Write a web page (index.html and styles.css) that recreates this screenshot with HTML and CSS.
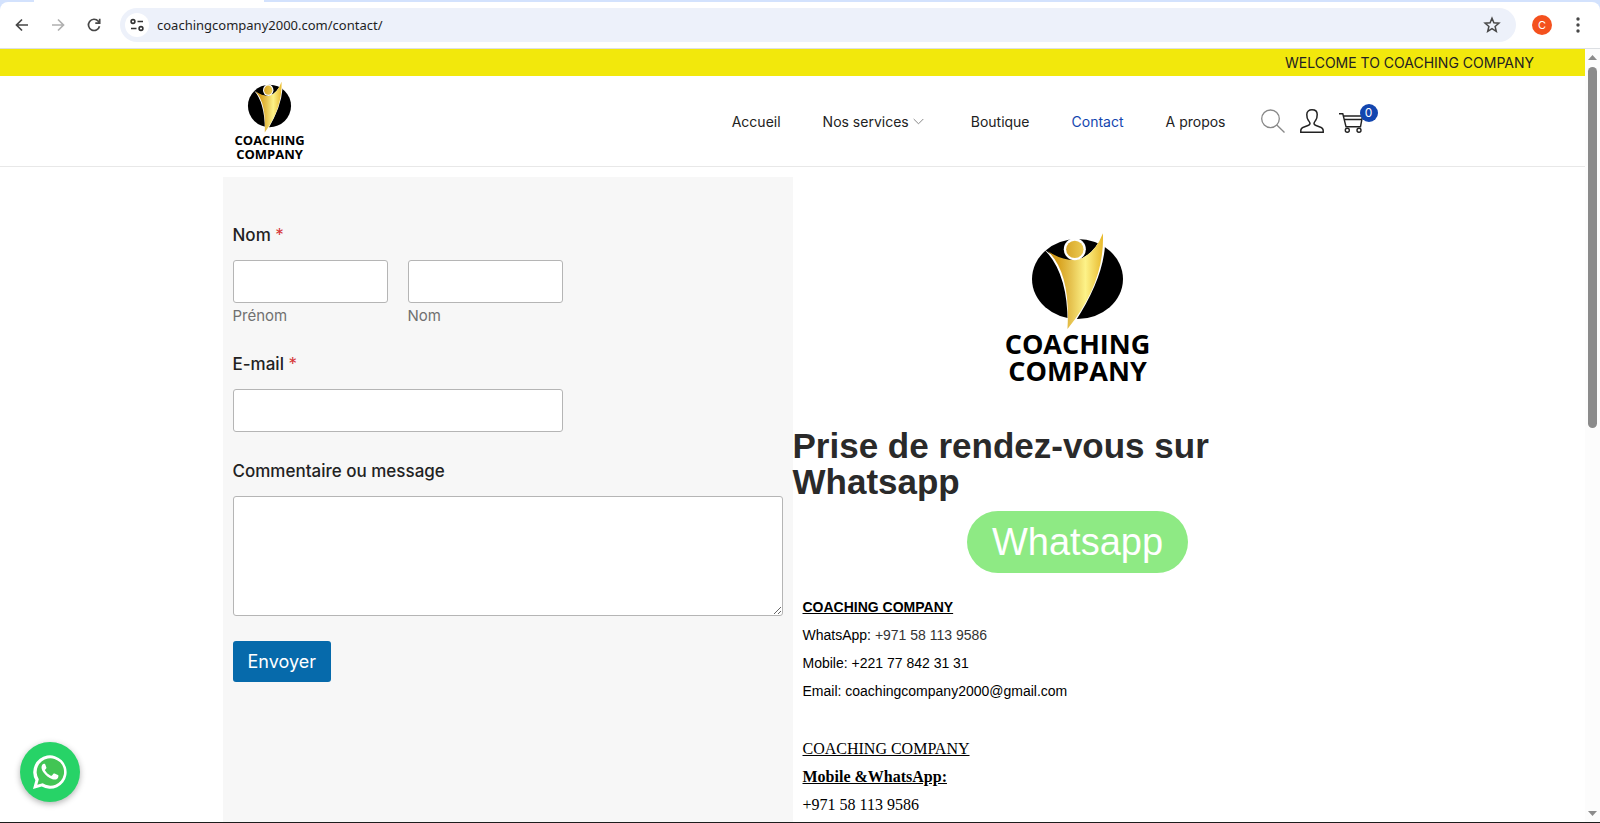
FILE: index.html
```html
<!DOCTYPE html>
<html lang="fr">
<head>
    <meta charset="UTF-8">
    <meta name="viewport" content="width=device-width, initial-scale=1.0">
    <title>Contact - Coaching Company</title>
    <link rel="stylesheet" href="styles.css">
</head>
<body>
    <!-- Shared emblem -->
    <svg class="defs" aria-hidden="true">
        <defs>
            <linearGradient id="gold" x1="0" x2="1" y1="0" y2="0">
                <stop offset="0" stop-color="#c98f12"/>
                <stop offset="0.2" stop-color="#d9a420"/>
                <stop offset="0.42" stop-color="#e6c350"/>
                <stop offset="0.68" stop-color="#fdf288"/>
                <stop offset="1" stop-color="#e8b92c"/>
            </linearGradient>
            <linearGradient id="gold-head" x1="0" x2="1" y1="0" y2="0">
                <stop offset="0" stop-color="#d8a628"/>
                <stop offset="1" stop-color="#eccb52"/>
            </linearGradient>
        </defs>
        <symbol id="emblem" viewBox="150 36 284 294" preserveAspectRatio="none">
            <ellipse cx="292" cy="177" rx="136" ry="120" fill="#000"/>
            <path d="M190 86 Q240 128 290 120 Q340 108 371 36 L374 80 Q366 180 285 305 L262 332 Q268 160 190 86Z" fill="#fff"/>
            <path d="M204 94 Q246 122 288 120 Q342 108 368 40 Q374 190 262 327 Q272 160 204 94Z" fill="url(#gold)"/>
            <circle cx="284" cy="88" r="33" fill="#fff"/>
            <circle cx="284" cy="88" r="26" fill="url(#gold-head)"/>
        </symbol>
    </svg>

    <div class="tabs"></div>
    <div class="toolbar">
        <button class="tool" aria-label="Retour">
            <svg width="20" height="20" viewBox="0 0 20 20"><path d="M16 10H5M10 4.500L4.500 10l5.500 5.500" stroke="#474747" stroke-width="1.700" fill="none"/></svg>
        </button>
        <button class="tool" aria-label="Avancer">
            <svg width="20" height="20" viewBox="0 0 20 20"><path d="M4 10h11M10 4.500L15.500 10 10 15.500" stroke="#b0b0b0" stroke-width="1.700" fill="none"/></svg>
        </button>
        <button class="tool" aria-label="Actualiser">
            <svg width="20" height="20" viewBox="0 0 20 20"><path d="M15.500 11.200A5.600 5.600 0 1 1 14.300 6.200L15.500 7.600M15.700 3.800V8.200H11.300" stroke="#474747" stroke-width="1.700" fill="none"/></svg>
        </button>
        <div class="address">
            <span class="site-info">
                <svg width="16" height="16" viewBox="0 0 16 16" fill="none" stroke="#333" stroke-width="1.600"><circle cx="4" cy="4.500" r="1.900"/><path d="M8.500 4.500H14M2 11.500h5.500"/><circle cx="12" cy="11.500" r="1.900"/></svg>
            </span>
            <input class="url" type="text" aria-label="Adresse" value="coachingcompany2000.com/contact/">
            <button class="star" aria-label="Favori">
                <svg width="18" height="18" viewBox="0 0 18 18"><path d="M9 2.200l1.900 4.600 5 .4-3.800 3.200 1.200 4.900L9 12.700l-4.300 2.600 1.200-4.900L2.100 7.200l5-.4z" stroke="#474747" stroke-width="1.500" fill="none"/></svg>
            </button>
        </div>
        <button class="profile">C</button>
        <button class="tool menu-dots" aria-label="Menu">
            <svg width="4" height="16" viewBox="0 0 4 16" fill="#474747"><circle cx="2" cy="2" r="1.700"/><circle cx="2" cy="8" r="1.700"/><circle cx="2" cy="14" r="1.700"/></svg>
        </button>
    </div>

    <div class="viewport">
        <div class="page">
            <div class="top-bar">WELCOME TO COACHING COMPANY</div>
            <header class="header">
                <div class="container header-inner">
                    <a class="logo" href="#">
                        <svg class="logo-mark"><use href="#emblem"/></svg>
                        <span>COACHING<br>COMPANY</span>
                    </a>
                    <nav class="nav">
                        <a href="#">Accueil</a>
                        <a href="#" class="has-sub">Nos services
                            <svg width="11" height="7" viewBox="0 0 11 7"><path d="M.7 1l4.800 4.800L10.300 1" stroke="#888" fill="none"/></svg>
                        </a>
                        <a href="#">Boutique</a>
                        <a href="#" class="active">Contact</a>
                        <a href="#">A propos</a>
                    </nav>
                    <div class="header-icons">
                        <button aria-label="Rechercher">
                            <svg width="24" height="24" viewBox="0 0 24 24" fill="none" stroke="#888" stroke-width="1.300"><circle cx="9.500" cy="9.800" r="8.800"/><path d="M15.800 16l7.700 7.500"/></svg>
                        </button>
                        <button aria-label="Compte">
                            <svg width="24" height="24" viewBox="0 0 24 24" fill="none" stroke="#222" stroke-width="1.500"><path d="M.8 23.200v-1.700c0-2 1.500-3 4-3.800 3-1 5.200-1.400 5.200-3.200 0-1.200-.8-2-1.700-3.200C7 9.600 6.800 7 6.800 5.500 6.800 2.500 9 .8 12 .8s5.200 1.700 5.200 4.700c0 1.500-.2 4.100-1.500 5.800-.9 1.200-1.700 2-1.700 3.200 0 1.800 2.200 2.200 5.200 3.200 2.500.8 4 1.800 4 3.800v1.700z"/></svg>
                        </button>
                        <button class="cart" aria-label="Panier">
                            <svg width="24" height="24" viewBox="0 0 24 24" fill="none" stroke="#222" stroke-width="1.400"><path d="M0 4.800h3.800L7 17.700h14.500L23.500 7H4.500M5.300 10.500h17.500"/><circle cx="8.300" cy="21.300" r="2"/><circle cx="20" cy="21.300" r="2"/></svg>
                            <span class="badge">0</span>
                        </button>
                    </div>
                </div>
            </header>

            <main class="container columns">
                <form class="contact-form">
                    <fieldset class="field names">
                        <legend class="label">Nom <span class="required">*</span></legend>
                        <div class="name-row">
                            <div>
                                <input type="text" id="prenom">
                                <label class="sublabel" for="prenom">Prénom</label>
                            </div>
                            <div>
                                <input type="text" id="nom">
                                <label class="sublabel" for="nom">Nom</label>
                            </div>
                        </div>
                    </fieldset>
                    <div class="field">
                        <label class="label" for="email">E-mail <span class="required">*</span></label>
                        <input class="medium" type="email" id="email">
                    </div>
                    <div class="field">
                        <label class="label" for="message">Commentaire ou message</label>
                        <textarea id="message"></textarea>
                    </div>
                    <button class="submit-button" type="submit">Envoyer</button>
                </form>

                <section class="info">
                    <div class="big-logo">
                        <svg class="big-logo-mark"><use href="#emblem"/></svg>
                        <span>COACHING<br>COMPANY</span>
                    </div>
                    <h2>Prise de rendez-vous sur Whatsapp</h2>
                    <a class="whatsapp-button" href="#">Whatsapp</a>
                    <div class="details">
                        <p><b><u>COACHING COMPANY</u></b></p>
                        <p>WhatsApp: <span class="phone">+971 58 113 9586</span></p>
                        <p>Mobile: +221 77 842 31 31</p>
                        <p>Email: coachingcompany2000@gmail.com</p>
                    </div>
                    <div class="details serif">
                        <p><u>COACHING COMPANY</u></p>
                        <p><b><u>Mobile &amp;WhatsApp:</u></b></p>
                        <p>+971 58 113 9586</p>
                    </div>
                </section>
            </main>
        </div>
        <div class="scrollbar">
            <svg width="9" height="5" viewBox="0 0 9 5"><path d="M0 5L4.500 0 9 5z" fill="#8b8b8b"/></svg>
            <div class="track"><div class="thumb"></div></div>
            <svg width="9" height="5" viewBox="0 0 9 5"><path d="M0 0L4.500 5 9 0z" fill="#8b8b8b"/></svg>
        </div>
    </div>

    <a class="whatsapp-float" href="#" aria-label="WhatsApp">
        <svg width="34" height="34" viewBox="0 0 34 34">
            <path d="M0 34l2.400-8.700A16.700 16.700 0 1 1 8.700 31.600z" fill="#fff"/>
            <path d="M4.300 29.700l1.500-5.400A13.700 13.700 0 1 1 9.700 28.300z" fill="#42c554"/>
            <path d="M12.300 9.600c-.4-.8-.8-.8-1.300-.8-1.200 0-2.500 1.500-2.500 3.600 0 2.200 1.500 4.300 2.500 5.500 1.800 2.300 4.500 5 8.500 6.300 3.500 1.200 5.500-.7 5.800-2.300.2-1.200.2-1.500-.4-1.800l-3.300-1.600c-.5-.2-.9-.2-1.200.3l-1.400 1.700c-.3.400-.7.400-1.200.2-2.700-1.200-4.400-2.800-5.700-5.100-.3-.5 0-.8.2-1l.9-1.200c.3-.4.3-.7.100-1.100z" fill="#fff"/>
        </svg>
    </a>
</body>
</html>
```
FILE: styles.css
```css
* {
    box-sizing: border-box;
}
body {
    margin: 0;
    height: 100vh;
    display: flex;
    flex-direction: column;
    overflow: hidden;
    background: #d3e2fd;
    border-bottom: 1px solid #1c1c1c;
    font-family: Inter, "Open Sans", sans-serif;
    font-size: 14px;
    color: #222;
}
a {
    color: inherit;
    text-decoration: none;
}
button {
    border: none;
    padding: 0;
    background: none;
    font-family: inherit;
    cursor: pointer;
}
svg {
    display: block;
}
.defs {
    position: absolute;
    width: 0;
    height: 0;
}

/* Browser bar */
.tabs {
    flex: none;
    width: 230px;
    height: 2px;
    margin-left: 34px;
    background: #fff;
}
.toolbar {
    flex: none;
    display: flex;
    align-items: center;
    height: 47px;
    padding: 0 12px;
    background: #fff;
    border-bottom: 1px solid #dcdfe3;
    border-radius: 8px 8px 0 0;
}
.tool {
    width: 20px;
    margin-right: 16px;
}
.address {
    flex: 1;
    display: flex;
    align-items: center;
    height: 34px;
    padding: 0 15px 0 5px;
    background: #edf1fa;
    border-radius: 17px;
}
.site-info {
    display: flex;
    align-items: center;
    justify-content: center;
    width: 24px;
    height: 24px;
    background: #fff;
    border-radius: 12px;
}
.url {
    flex: 1;
    margin-left: 8px;
    padding: 0;
    border: none;
    outline: none;
    background: none;
    font-family: "Noto Sans", sans-serif;
    font-size: 13px;
    color: #1f1f1f;
}
.profile {
    width: 20px;
    height: 20px;
    margin: 0 16px;
    border-radius: 50%;
    background: #f4511e;
    color: #fff;
    font-size: 11px;
}
.menu-dots {
    display: flex;
    justify-content: center;
    width: 20px;
    margin: 0;
}

/* Page */
.viewport {
    flex: 1;
    display: flex;
    min-height: 0;
    background: #fff;
}
.page {
    flex: 1;
    overflow: hidden;
}
.scrollbar {
    display: flex;
    flex-direction: column;
    align-items: center;
    width: 15px;
    padding: 6px 0;
    background: #fcfcfc;
}
.track {
    flex: 1;
    padding: 7px 0;
}
.thumb {
    width: 9px;
    height: 49%;
    border-radius: 5px;
    background: #8b8b8b;
}
.container {
    width: 100%;
    max-width: 1140px;
    margin: 0 auto;
}
.top-bar {
    padding: 0 51px;
    background: #f2e80c;
    line-height: 27px;
    text-align: right;
}
.header {
    border-bottom: 1px solid #e8e8e8;
}
.header-inner {
    display: flex;
    align-items: center;
    height: 90px;
}
.logo {
    display: flex;
    flex-direction: column;
    align-items: center;
    margin-left: 12px;
    color: #000;
    font: bold 13px/14px "Open Sans", sans-serif;
    text-align: center;
}
.logo-mark {
    width: 45px;
    height: 52px;
}
.nav {
    display: flex;
    gap: 42px;
    margin-left: auto;
    font-size: 14px;
}
.nav .has-sub {
    display: flex;
    align-items: center;
    gap: 4px;
    margin-right: 5px;
}
.nav .active {
    color: #1346af;
}
.header-icons {
    display: flex;
    gap: 15px;
    margin-left: 35px;
}
.cart {
    position: relative;
}
.badge {
    position: absolute;
    top: -5px;
    right: -15px;
    width: 18px;
    border-radius: 9px;
    background: #1346af;
    color: #fff;
    font-size: 12px;
    line-height: 18px;
}
.columns {
    display: grid;
    grid-template-columns: 1fr 1fr;
    margin-top: 10px;
}

/* Form */
.contact-form {
    min-height: 700px;
    padding: 48px 10px;
    background: #f7f7f7;
}
.field {
    margin: 0 0 29px;
    padding: 0;
    border: none;
}
.label {
    display: block;
    margin-bottom: 15px;
    padding: 0;
    font-size: 17px;
    font-weight: 500;
    line-height: 20px;
}
.required {
    color: #d63637;
    font-weight: 400;
}
.contact-form input,
.contact-form textarea {
    display: block;
    width: 100%;
    height: 43px;
    padding: 10px;
    border: 1px solid #b5b5b5;
    border-radius: 3px;
    background: #fff;
}
.contact-form textarea {
    height: 120px;
}
.name-row {
    display: grid;
    grid-template-columns: 1fr 1fr;
    gap: 20px;
    width: 60%;
}
.contact-form .medium {
    width: 60%;
}
.sublabel {
    display: block;
    margin-top: 4px;
    color: #707070;
    font-size: 15px;
    line-height: 18px;
}
.submit-button {
    display: block;
    height: 41px;
    margin-top: -4px;
    padding: 0 15px;
    border-radius: 3px;
    background: #066aab;
    color: #fff;
    font-size: 18px;
}

/* Contact details */
.info {
    padding-top: 55px;
    font-family: "Liberation Sans", Arial, sans-serif;
}
.big-logo {
    display: flex;
    flex-direction: column;
    align-items: center;
    color: #000;
    font: bold 27px/27px "Open Sans", sans-serif;
    text-align: center;
}
.big-logo-mark {
    width: 95px;
    height: 98px;
}
.info h2 {
    margin: 44px 0 11px;
    color: #2a2a2a;
    font-size: 35px;
    line-height: 36px;
}
.whatsapp-button {
    display: block;
    width: fit-content;
    margin: 0 auto 20px;
    padding: 0 25px;
    border-radius: 31px;
    background: #8eea84;
    color: #fff;
    font-size: 38px;
    line-height: 62px;
}
.details {
    margin: 0 10px 30px;
    color: #000;
    font-size: 14px;
    line-height: 28px;
}
.details p {
    margin: 0;
}
.phone {
    color: #333;
}
.serif {
    font-family: "Liberation Serif", "Times New Roman", serif;
    font-size: 16px;
}
.whatsapp-float {
    position: fixed;
    left: 20px;
    bottom: 21px;
    padding: 13px;
    border-radius: 50%;
    background: #27d367;
    box-shadow: 0 2px 6px rgba(0, 0, 0, 0.3);
}
```
